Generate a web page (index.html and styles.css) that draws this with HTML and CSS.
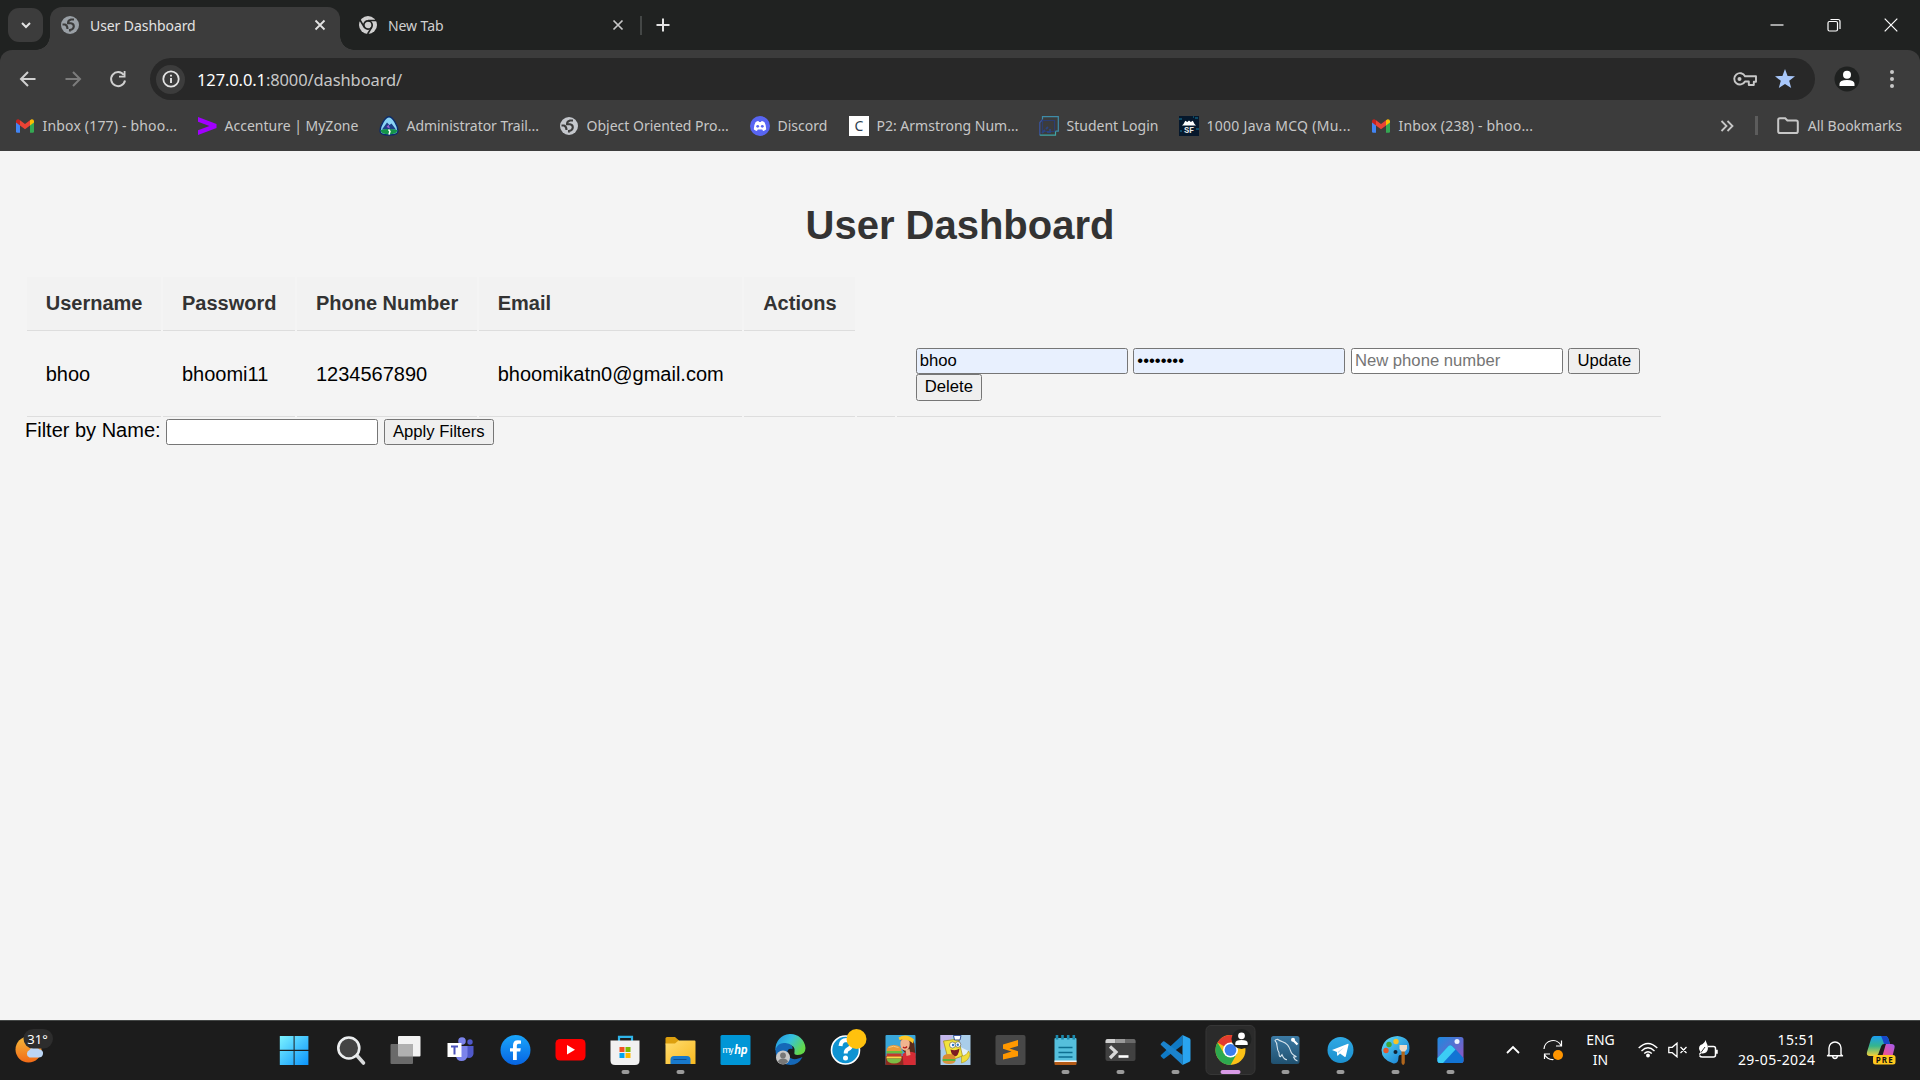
FILE: index.html
```html
<!DOCTYPE html>
<html lang="en">
<head>
<meta charset="utf-8">
<title>User Dashboard</title>
<link rel="stylesheet" href="styles.css">
</head>
<body>
<svg class="defs" width="0" height="0" aria-hidden="true">
  <defs>
    <symbol id="globe" viewBox="0 0 20 20">
      <circle cx="10" cy="10" r="9" fill="currentColor"/>
      <path d="M14 4.500h-3Q8 5.200 8 8.200h3q2.800.3 2.800 3.300-.3 3-3.800 3.500v1.500M2.500 9.500H5q2.500.8 2.500 4.500" fill="none" stroke="var(--hole)" stroke-width="2.100"/>
    </symbol>
    <symbol id="gmail" viewBox="0 0 20 20">
      <path d="M1 5v10.500q0 1.200 1.200 1.200H5V8z" fill="#4285f4"/>
      <path d="M19 5v10.500q0 1.200-1.200 1.200H15V8z" fill="#34a853"/>
      <path d="M15 4.300v5.200l4-3V5q-.2-2-2.400-1.800z" fill="#fbbc04"/>
      <path d="M5 4.300v5.200l-4-3V5q.2-2 2.400-1.800z" fill="#c5221f"/>
      <path d="M5 4.300 10 8l5-3.700v5.200L10 13.200 5 9.500z" fill="#ea4335"/>
    </symbol>
    <linearGradient id="gWin" x1="0" y1="0" x2="1" y2="1"><stop offset="0" stop-color="#7cf3ff"/><stop offset="1" stop-color="#0a93fb"/></linearGradient>
    <linearGradient id="gSun" x1="0" y1="0" x2="0" y2="1"><stop offset="0" stop-color="#f5b93a"/><stop offset="1" stop-color="#f26a17"/></linearGradient>
    <linearGradient id="gFb" x1="0" y1="0" x2="0" y2="1"><stop offset="0" stop-color="#19a5fb"/><stop offset="1" stop-color="#0764e2"/></linearGradient>
    <linearGradient id="gFold" x1="0" y1="0" x2="1" y2="1"><stop offset="0" stop-color="#ffdc70"/><stop offset="1" stop-color="#f9b91f"/></linearGradient>
    <linearGradient id="gEdge" x1="0" y1="0" x2="1" y2=".5"><stop offset="0" stop-color="#1f8fe0"/><stop offset=".5" stop-color="#35c0e0"/><stop offset="1" stop-color="#63d84a"/></linearGradient>
    <linearGradient id="gPhoto" x1="0" y1="0" x2="1" y2="1"><stop offset="0" stop-color="#1a8be0"/><stop offset="1" stop-color="#9a50c0"/></linearGradient>
    <linearGradient id="gPal" x1="0" y1="0" x2="1" y2="1"><stop offset="0" stop-color="#5fe0f8"/><stop offset="1" stop-color="#0e72cf"/></linearGradient>
    <linearGradient id="gTg" x1="0" y1="0" x2="0" y2="1"><stop offset="0" stop-color="#2fa9e4"/><stop offset="1" stop-color="#1c90cf"/></linearGradient>
    <linearGradient id="gSql" x1="0" y1="0" x2="0" y2="1"><stop offset="0" stop-color="#3c7aa4"/><stop offset="1" stop-color="#20506f"/></linearGradient>
    <linearGradient id="gCo1" x1="0" y1="0" x2="0" y2="1"><stop offset="0" stop-color="#1b9df0"/><stop offset=".5" stop-color="#35b58c"/><stop offset="1" stop-color="#f4d03a"/></linearGradient>
    <linearGradient id="gCo2" x1="1" y1="0" x2="0" y2="1"><stop offset="0" stop-color="#a25cf0"/><stop offset=".6" stop-color="#e8529a"/><stop offset="1" stop-color="#f77b3c"/></linearGradient>
  </defs>
</svg>

<header class="browser">
  <div class="tabstrip">
    <button class="tab-search" aria-label="Search tabs"><svg width="12" height="12" viewBox="0 0 12 12"><path d="M2 4l4 4 4-4" fill="none" stroke="#e3e3e3" stroke-width="2"/></svg></button>
    <div class="tab active">
      <svg class="fav" viewBox="0 0 20 20"><use href="#globe"/></svg>
      <span class="label">User Dashboard</span>
      <svg class="x" viewBox="0 0 12 12"><path d="M1.500 1.500l9 9m0-9l-9 9" stroke="#e3e3e3" stroke-width="1.800"/></svg>
    </div>
    <div class="tab second">
      <svg class="fav" viewBox="0 0 20 20"><circle cx="10" cy="10" r="9" fill="#d0d0d0"/><circle cx="10" cy="10" r="4.200" fill="#d0d0d0" stroke="#202221" stroke-width="1.700"/><path d="M10 5.500h8.500M6.200 12.200L2 5M13.800 12.200L9.600 19" stroke="#202221" stroke-width="1.600"/></svg>
      <span class="label">New Tab</span>
      <svg class="x" viewBox="0 0 12 12"><path d="M1.500 1.500l9 9m0-9l-9 9" stroke="#c7c7c7" stroke-width="1.700"/></svg>
    </div>
    <span class="tab-sep"></span>
    <svg class="plus" width="14" height="14" viewBox="0 0 14 14"><path d="M7 .5v13M.5 7h13" stroke="#e3e3e3" stroke-width="2"/></svg>
    <div class="winbtns">
      <svg width="14" height="14" viewBox="0 0 14 14"><path d="M.5 7h13" stroke="#fff" stroke-width="1.200"/></svg>
      <svg width="14" height="14" viewBox="0 0 14 14"><rect x="1" y="3.500" width="9.500" height="9.500" rx="1.500" fill="none" stroke="#fff" stroke-width="1.200"/><path d="M3.500 1.500h7.500q2 0 2 2v7.500" fill="none" stroke="#fff" stroke-width="1.200"/></svg>
      <svg width="14" height="14" viewBox="0 0 14 14"><path d="M.7.700l12.600 12.600m0-12.600L.7 13.300" stroke="#fff" stroke-width="1.200"/></svg>
    </div>
  </div>
  <div class="toolbar">
    <div class="nav">
      <svg width="20" height="20" viewBox="0 0 20 20"><path d="M17.500 10H3.500M10 3L3 10l7 7" fill="none" stroke="#d0d0d0" stroke-width="2"/></svg>
      <svg width="20" height="20" viewBox="0 0 20 20"><path d="M2.500 10h14M10 3l7 7-7 7" fill="none" stroke="#7c7c7c" stroke-width="2"/></svg>
      <svg width="20" height="20" viewBox="0 0 20 20"><path d="M15.800 6A7 7 0 1 0 17 11.500" fill="none" stroke="#d0d0d0" stroke-width="2"/><path d="M17.500 2v6.500H11V6.800h4.700V2z" fill="#d0d0d0"/></svg>
    </div>
    <div class="omnibox">
      <span class="info"><svg width="18" height="18" viewBox="0 0 18 18"><circle cx="9" cy="9" r="7.700" fill="none" stroke="#e3e3e3" stroke-width="1.800"/><path d="M9 8v5M9 4.700v1.900" stroke="#e3e3e3" stroke-width="1.900"/></svg></span>
      <span class="url"><b>127.0.0.1</b>:8000/dashboard/</span>
      <svg class="key" width="24" height="16" viewBox="0 0 24 16"><path d="M12 5.200h11v5.600h-2.200V14h-5v-3.500H12A5.700 5.700 0 1 1 12 5.200z" fill="none" stroke="#c7c7c7" stroke-width="1.900" stroke-linejoin="round"/><circle cx="6.500" cy="8" r="2" fill="#c7c7c7"/></svg>
      <svg class="star" width="20" height="20" viewBox="0 0 20 20"><path d="M10 0l2.600 6.900 7.400.3-5.800 4.600 2 7.200L10 14.900 3.800 19l2-7.200L0 7.200l7.400-.3z" fill="#a8c7fa"/></svg>
    </div>
    <svg class="avatar" width="26" height="26" viewBox="0 0 26 26"><circle cx="13" cy="13" r="12.500" fill="#1f2120"/><circle cx="13" cy="8.800" r="4" fill="#fff"/><path d="M5.500 20v-2.200q0-3.800 7.500-3.800t7.500 3.800V20z" fill="#fff"/></svg>
    <svg class="dots" width="6" height="20" viewBox="0 0 6 20"><g fill="#c7c7c7"><circle cx="3" cy="3" r="2"/><circle cx="3" cy="10" r="2"/><circle cx="3" cy="17" r="2"/></g></svg>
  </div>
  <nav class="bookmarks">
    <div class="marks">
      <a class="mail"><svg viewBox="0 0 20 20"><use href="#gmail"/></svg><span>Inbox (177) - bhoo...</span></a>
      <a><svg viewBox="0 0 20 20"><path d="M1 1l18.500 7v4L1 19v-4.800L12.500 10 1 5.800z" fill="#a100ff"/></svg><span>Accenture | MyZone</span></a>
      <a class="trail"><svg viewBox="0 0 20 20"><path d="M10 .8C6 .8 1 10 1 15q0 4 9 4t9-4C19 10 14 .8 10 .8z" fill="#8ad4f5" stroke="#0b2b6b" stroke-width="1.400"/><path d="M3 13.500L8 6.500l2.500 2.500 2-1.500 4.500 6z" fill="#1d3f86"/><path d="M7.500 11l2-2.500 1.500 4z" fill="#9a5bd0"/><path d="M1.700 14q8-2 16.600 0 0 4.300-8.300 4.300T1.700 14z" fill="#149447"/><path d="M9.500 13.500l1.500 2-1 3" fill="none" stroke="#fff" stroke-width="1.500"/></svg><span>Administrator Trail...</span></a>
      <a class="web"><svg viewBox="0 0 20 20"><use href="#globe"/></svg><span>Object Oriented Pro...</span></a>
      <a><svg viewBox="0 0 20 20"><circle cx="10" cy="10" r="10" fill="#5865f2"/><path d="M5.500 6.200q1.500-1.200 3-1.200l.5.900h2l.5-.9q1.500 0 3 1.200 1.900 3.500 1.600 7.200-1.600 1.300-3 1.500l-.9-1.500H7.800l-.9 1.500q-1.400-.2-3-1.500Q3.600 9.700 5.500 6.200z" fill="#fff"/><circle cx="7.700" cy="10.300" r="1.400" fill="#5865f2"/><circle cx="12.300" cy="10.300" r="1.400" fill="#5865f2"/></svg><span>Discord</span></a>
      <a><i class="cbox">C</i><span>P2: Armstrong Num...</span></a>
      <a><svg viewBox="0 0 20 20"><g fill="none" stroke-width="1.200"><path d="M3.500 3.500V.7h15.800v14.500h-2.800" stroke="#3f8ca8"/><path d="M.8 19.200V6.500L3.500 3.500" stroke="#3a55a0"/><path d="M.8 19.200h15.700v-4" stroke="#3fa6a6"/><path d="M3.500 15.500v-11h12v11z" stroke="#2c3e72"/><path d="M3 17l3-3m1-1l2-2M8 16h3v-3" stroke="#2c4580" stroke-width="1.800"/></g></svg><span>Student Login</span></a>
      <a class="java"><svg viewBox="0 0 20 20"><rect width="20" height="20" fill="#06182c"/><path d="M0 3h3M16 2h3M1 15h2M17 13h3M14 1h1" stroke="#0c4a66" stroke-width="2"/><path d="M4.500 8l1.800-3.200 2 1.200L10 4.500l1.800 1.500 2-1.200L15.500 8l1.500 1.500H3z" fill="#fff"/><text x="10" y="17" text-anchor="middle" font-size="8" font-weight="bold" font-family="Inter, sans-serif" fill="#e8e8e8">SF</text></svg><span>1000 Java MCQ (Mu...</span></a>
      <a class="mail"><svg viewBox="0 0 20 20"><use href="#gmail"/></svg><span>Inbox (238) - bhoo...</span></a>
    </div>
    <div class="rest">
      <svg width="14" height="14" viewBox="0 0 14 14"><path d="M1.500 2l5 5-5 5M7.500 2l5 5-5 5" fill="none" stroke="#c7c7c7" stroke-width="1.800"/></svg>
      <i class="bar"></i>
      <svg class="folder" width="22" height="18" viewBox="0 0 22 18"><path d="M1.200 3q0-1.800 1.600-1.800h5.400l2.200 2.300h8.800q1.600 0 1.600 1.700v9q0 1.800-1.600 1.800H2.800q-1.600 0-1.600-1.800z" fill="none" stroke="#c7c7c7" stroke-width="2"/></svg>
      <span>All Bookmarks</span>
    </div>
  </nav>
</header>

<main class="page">
  <h1>User Dashboard</h1>
  <table>
    <tr><th>Username</th><th>Password</th><th>Phone Number</th><th>Email</th><th>Actions</th></tr>
    <tr>
      <td>bhoo</td><td>bhoomi11</td><td>1234567890</td><td>bhoomikatn0@gmail.com</td><td></td><td></td>
      <td><div class="edit"><input class="filled" type="text" value="bhoo"> <input class="filled" type="password" value="bhoomi11"> <input type="text" placeholder="New phone number"> <button>Update</button> <button>Delete</button></div></td>
    </tr>
  </table>
  <form class="filter"><label for="name">Filter by Name:</label> <input id="name" type="text"> <button type="button">Apply Filters</button></form>
</main>

<footer class="taskbar">
  <svg class="weather" width="60" height="60" viewBox="0 0 60 60"><circle cx="28.500" cy="29.500" r="13" fill="url(#gSun)"/><path d="M29.500 37.500a4 4 0 0 1 0-7.500 6 5.500 0 0 1 10-.5q4 .6 3.500 4.500-.6 3.500-4.500 3.500z" fill="#bcd6f5"/><rect x="23.500" y="9" width="29.500" height="19.500" rx="9.700" fill="#2d2d2d"/><text x="37.500" y="23.500" text-anchor="middle" font-family="Noto Sans, sans-serif" font-size="13" fill="#fff">31°</text></svg>
  <div class="apps">
    <svg viewBox="-27.5 0 55 60"><path d="M-15.700 16h13.800v13.800h-13.800zM-.9 16h13.800v13.800H-.9zM-15.700 31h13.800v14h-13.800zM-.9 31h13.800v14H-.9z" fill="url(#gWin)"/></svg>
    <svg viewBox="-27.5 0 55 60"><path d="M6 35l7 8" stroke="#d8dadb" stroke-width="3.600" stroke-linecap="round"/><circle cx="-1.700" cy="28" r="10.500" fill="#444" stroke="#eceeef" stroke-width="2.600"/></svg>
    <svg viewBox="-27.5 0 55 60"><rect x="-7.500" y="16" width="22.500" height="20.500" rx="1" fill="#f2f2f2"/><rect x="-15" y="24" width="22.500" height="20" rx="1" fill="#6a6a6a"/><path d="M-7.500 24h15v12.500h-14q-1 0-1-1z" fill="#b0b0b0"/></svg>
    <svg viewBox="-27.5 0 55 60"><circle cx="9.500" cy="22" r="2.700" fill="#5059c9"/><path d="M5 26h8v8q-1 4-4.500 4T3 36z" fill="#5059c9"/><circle cx="1.500" cy="21" r="3.800" fill="#7b83eb"/><path d="M-4.500 26H7v10q-1 5-6 5t-5.500-5z" fill="#7b83eb"/><rect x="-13" y="23" width="14" height="14" fill="#fff"/><path d="M-9.500 26.500h7M-6 26.500v8" stroke="#4b53bc" stroke-width="2"/></svg>
    <svg viewBox="-27.5 0 55 60"><circle cy="30" r="15" fill="url(#gFb)"/><path d="M5.500 20.500v3.200H3.200q-1.900 0-1.900 1.800v2.700h4l-.6 3.400H1.300v8.400h-3.800v-8.400h-3v-3.400h3v-2.700q0-5.200 4.900-5.200z" fill="#fff"/></svg>
    <svg viewBox="-27.5 0 55 60"><rect x="-15" y="19" width="30" height="21.500" rx="4.500" fill="#f00"/><path d="M-3.500 25v9.500l8-4.700z" fill="#fff"/></svg>
    <svg viewBox="-27.5 0 55 60"><path d="M-6.500 22v-5.200h13V22" fill="none" stroke="#2fb4e8" stroke-width="2.200"/><path d="M-15 20.500h29v20q0 4.500-4.500 4.500h-20q-4.500 0-4.500-4.500z" fill="#f1f1f1"/><path d="M-6 27h5v5h-5z" fill="#f25022"/><path d="M0 27h5v5H0z" fill="#7fba00"/><path d="M-6 33h5v5h-5z" fill="#00a4ef"/><path d="M0 33h5v5H0z" fill="#ffb900"/><rect x="-4" y="50" width="8" height="4" rx="2" fill="#9a9a9a"/></svg>
    <svg viewBox="-27.5 0 55 60"><path d="M-15 18.500q0-1.500 1.500-1.500h8l4 3.500v4h-13.500z" fill="#dd9f0e"/><path d="M-15 23.500h9.500l3.500-3h16q1 0 1 1V44h-30z" fill="url(#gFold)"/><path d="M-10 44v-4.500q0-3.500 3.500-3.500h13q3.500 0 3.500 3.500V44z" fill="#1879cc"/><path d="M-7 39.500h13" stroke="#0d4f91" stroke-width="1"/><rect x="-4" y="50" width="8" height="4" rx="2" fill="#9a9a9a"/></svg>
    <svg viewBox="-27.5 0 55 60"><rect x="-15" y="15" width="30" height="30" rx="1.500" fill="#0096d6"/><text x="-13" y="33" font-family="Roboto, sans-serif" font-size="9" fill="#fff" textLength="11">my</text><text x="-1" y="34" font-family="Roboto, sans-serif" font-size="13" font-style="italic" font-weight="bold" fill="#fff" textLength="13" lengthAdjust="spacingAndGlyphs">hp</text></svg>
    <svg viewBox="-27.5 0 55 60"><path d="M-15 30a15 15 0 0 1 30-2q0 7-8 7-4 0-3-3 1-7-6-7-8 0-7 10z" fill="url(#gEdge)"/><path d="M-15 29q3-7 10-6 8 1 7 6-6-1-5 5 2 6 9 5 4-1 6-2-4 8-12 8-15-1-15-16z" fill="#1568b8"/><circle cx="-7.500" cy="37.500" r="7" fill="#c9c9c9"/><circle cx="-7.500" cy="35.500" r="2.900" fill="#777"/><path d="M-12.500 42q.5-3.500 5-3.500t5 3.500q-5 4.500-10 0z" fill="#777"/></svg>
    <svg viewBox="-27.5 0 55 60"><circle cy="30" r="14" fill="#0f93d2" stroke="#fff" stroke-width="1.600"/><path d="M-5 26q.5-6 6-6 5 .5 5 4.500 0 3-4 5-1.800 1-1.800 4" fill="none" stroke="#fff" stroke-width="4"/><circle cx="0" cy="38" r="2.500" fill="#fff"/><circle cx="11" cy="19" r="10" fill="#ffc10e"/></svg>
    <svg viewBox="-27.5 0 55 60"><rect x="-15" y="15" width="30" height="30" rx="1" fill="#3aa7da"/><path d="M-15 36h30v9h-30z" fill="#8b2b20"/><path d="M0 19q11-7 14 5l1 14-5 1-8-9z" fill="#5a2b1c"/><path d="M0 22q1-4 5.500-3.500 5 1.500 3.500 7.500-1.500 5-5 4.500-5-1.500-4-8.500z" fill="#f2b48e"/><path d="M-2 17.500q8-5 15.500 2l-1 4Q7 18-1 20z" fill="#ffc928"/><path d="M2 34q5-4 13-1v12H3z" fill="#d62c35"/><path d="M5 30l4-1 1 6-4 1z" fill="#e8a680"/><path d="M2.500 27q2 2 4-.5" stroke="#b71c1c" stroke-width="1.300" fill="none"/><path d="M-14 31q0-6 7.500-6T1 31z" fill="#e69a3a"/><path d="M-12 27.500q5-2.500 10 0" stroke="#f6c777" fill="none"/><path d="M-14 31h16v2.500h-16z" fill="#6abf3c"/><path d="M-14 33.500h15v3h-15z" fill="#c43a2b"/><path d="M-14 36.500h15v2h-15z" fill="#ffd24a"/><path d="M-14 38.500h15q-1 5-7.500 5t-7.500-5z" fill="#7dbb45"/></svg>
    <svg viewBox="-27.5 0 55 60"><rect x="-15" y="15" width="30" height="30" fill="#a9cdea"/><path d="M-15 15h12l-4 10-8 5z" fill="#c3b6ea"/><path d="M5 27l8 4-3 8-5-3z" fill="#e4f0fa"/><path d="M-12 21l15-2 4 17-14 5z" fill="#f3e33c" stroke="#a9961d" stroke-width=".8"/><path d="M-2 15.500h7.500l-1 4.500H-1z" fill="#fff" stroke="#27428c" stroke-width=".9"/><circle cx="-3" cy="25" r="3" fill="#fff" stroke="#333" stroke-width=".5"/><circle cx="2.500" cy="24.500" r="2.800" fill="#fff" stroke="#333" stroke-width=".5"/><circle cx="-2.500" cy="25" r="1.200" fill="#2c77c4"/><circle cx="2.300" cy="24.700" r="1.200" fill="#2c77c4"/><path d="M-5 29.500q5 2 9-1-1 8-5 8-3-1-4-7z" fill="#7c1d22"/><path d="M6 36q5 0 7-5l1.500 3q-1 7-8.500 9z" fill="#f0dc3a" stroke="#a9961d" stroke-width=".6"/><path d="M-13 39q0-5 6.500-5T0 39z" fill="#d98a31"/><path d="M-13 39H0v2h-13z" fill="#5cb338"/><path d="M-13 41H0q-1 3-6.500 3t-6.500-3z" fill="#d99340"/></svg>
    <svg viewBox="-27.5 0 55 60"><rect x="-15" y="15" width="30" height="30" rx="2" fill="#484848"/><path d="M7.500 20v6L-1 28.500l8.500 2.800v4.900L-7.500 39.500v-5.300L1 31.500l-8.500-2.800v-4.200z" fill="#ff9800"/></svg>
    <svg viewBox="-27.5 0 55 60"><rect x="-11" y="18" width="22" height="25" rx="1" fill="#55bfdc"/><path d="M-11 41.500h22V44q0 1-1 1h-20q-1 0-1-1z" fill="#b35a16"/><path d="M-11 40.500h22v1.500h-22z" fill="#f4f4f4"/><path d="M-7 27.500H7M-7 32.500H7M-7 37H7" stroke="#0d6f91" stroke-width="1.700"/><path d="M-8.500 15v4.500M-3 15v4.500M2.700 15v4.500M8.300 15v4.500" stroke="#1b8aae" stroke-width="2.600"/><rect x="-4" y="50" width="8" height="4" rx="2" fill="#9a9a9a"/></svg>
    <svg viewBox="-27.5 0 55 60"><rect x="-15" y="19" width="30" height="22" rx="2" fill="#414141"/><path d="M-15 23v-2q0-2 2-2h8v4z" fill="#d0d0d0"/><path d="M-5 19H5v4H-5z" fill="#9a9a9a"/><path d="M5 19h8q2 0 2 2v2H5z" fill="#6a6a6a"/><path d="M-10.500 26.500l6 5.500-6 6" fill="none" stroke="#d8d8d8" stroke-width="3.200"/><path d="M-2 36.500H8" stroke="#fff" stroke-width="2.600"/><rect x="-4" y="50" width="8" height="4" rx="2" fill="#9a9a9a"/></svg>
    <svg viewBox="-27.5 0 55 60"><path d="M7 15v10L-11 38.500q-.8.500-1.500 0l-2-2q-.8-.8 0-1.600z" fill="#0f79c4"/><path d="M7 45V35L-11 21.500q-.8-.5-1.500 0l-2 2q-.8.800 0 1.600z" fill="#1b83cc"/><path d="M7 15l6.500 3q1.500.7 1.500 2v20q0 1.300-1.500 2L7 45z" fill="#29a4f0"/><rect x="-4" y="50" width="8" height="4" rx="2" fill="#9a9a9a"/></svg>
    <svg viewBox="-27.5 0 55 60"><rect x="-24.500" y="5.500" width="49" height="49" rx="5" fill="#2b2b2b" stroke="#363636"/><circle cy="30" r="15" fill="#fbc116"/><path d="M0 30L-13 22.500A15 15 0 0 1 13 22.500H0z" fill="#e33b2e"/><path d="M-13 22.500A15 15 0 0 0 0 45L6.500 33.500 0 30-6.500 33.500z" fill="#2da94f"/><circle cy="30" r="7.500" fill="#fff"/><circle cy="30" r="5.900" fill="#3b7ded"/><circle cx="11" cy="19" r="10" fill="#1f2120"/><circle cx="11" cy="15.800" r="3.400" fill="#fff"/><path d="M4.800 25v-2q0-3 6.200-3t6.200 3v2z" fill="#fff"/><rect x="-10" y="50" width="20" height="4" rx="2" fill="#d89ae6"/></svg>
    <svg viewBox="-27.5 0 55 60"><rect x="-14.500" y="16" width="28.500" height="28" rx="2.500" fill="url(#gSql)"/><path d="M12 41q-3-1-4-4l3-.3q-5-2-6-6-2-7-8-9-3-1-5-2.500-2 0-2.500 1.500 2 2 2 5 .5 5 2 7 0 4 1.500 4l1.500-2q2 5 5 5" fill="none" stroke="#d5e3ec" stroke-width="1.100"/><path d="M7 19.500l5 5" stroke="#fff" stroke-width="2.200"/><circle cx="7.500" cy="19.800" r="2" fill="#fff"/><rect x="-4" y="50" width="8" height="4" rx="2" fill="#9a9a9a"/></svg>
    <svg viewBox="-27.5 0 55 60"><circle cy="30" r="13" fill="url(#gTg)"/><path d="M-8.500 30L7.500 23.800q.8-.2.500 1l-2.700 11.500q-.3 1-1.300.5L-.5 33.500l-2 2q-.8.600-.9-.5l-.2-3z" fill="#fff"/><path d="M-3 32l7-5-6.200 6" fill="#b8d8ec"/><rect x="-4" y="50" width="8" height="4" rx="2" fill="#9a9a9a"/></svg>
    <svg viewBox="-27.5 0 55 60"><path d="M2 16q12 1 12 12 0 8-6 7-5-1-5 2 0 7-5 6.500Q-14 40-14 30-12 17 2 16z" fill="url(#gPal)"/><circle cx="0" cy="32" r="2" fill="#123"/><circle cx="-9.500" cy="30.500" r="2.700" fill="#e2572b"/><circle cx="-6.500" cy="24.500" r="2.700" fill="#3fa535"/><circle cx=".5" cy="21.500" r="2.700" fill="#f7c325"/><path d="M6 30.500h3.300V43q-1.600 4-3.300 0z" fill="#b0661c"/><path d="M4 25h7.500v4l-2 2.500H6L4 29z" fill="#eddcc8"/><rect x="-4" y="50" width="8" height="4" rx="2" fill="#9a9a9a"/></svg>
    <svg viewBox="-27.5 0 55 60"><rect x="-13" y="17" width="26" height="26" rx="2.500" fill="url(#gPhoto)"/><path d="M-13 38L-2.500 26.500q2.500-2.500 5 0L13 38v2.500q0 2.500-2.500 2.500h-21q-2.500 0-2.500-2.500z" fill="#1274d4"/><path d="M-13 38L-2.500 26.500q2-2 4-.6L5 29.500-7.500 43h-3q-2.500 0-2.500-2.500z" fill="#3ccdf5"/><circle cx="6.500" cy="21.500" r="2.500" fill="#eaf2ff"/><rect x="-4" y="50" width="8" height="4" rx="2" fill="#9a9a9a"/></svg>
  </div>
  <div class="tray">
    <svg class="chev" width="14" height="10" viewBox="0 0 14 10"><path d="M1 8l6-6 6 6" fill="none" stroke="#fff" stroke-width="1.800"/></svg>
    <svg class="sync" width="20" height="22" viewBox="0 0 20 22"><g fill="none" stroke="#fff" stroke-width="1.200"><path d="M1 10A9 9 0 0 1 18 6.500M18.500 1.500v5.500H13M1.500 20v-5H7M1.500 15.500q3 5.500 9 5"/></g><circle cx="15" cy="16" r="5" fill="#ff9500"/></svg>
    <div class="lang"><span>ENG</span><span>IN</span></div>
    <svg class="wifi" width="20" height="16" viewBox="0 0 20 16"><g fill="none" stroke="#fff" stroke-width="1.400"><path d="M.7 6Q10-3.200 19.300 6M3.500 8.900Q10 2.700 16.500 8.900M6.200 11.500Q10 8 13.800 11.500"/></g><circle cx="10" cy="13.500" r="1.900" fill="#fff"/></svg>
    <svg class="mute" width="20" height="16" viewBox="0 0 20 16"><path d="M.8 5.300h3.400L9 1.200v13.600l-4.800-4.100H.8zM12.500 5l6 6m0-6l-6 6" fill="none" stroke="#fff" stroke-width="1.300"/></svg>
    <svg class="batt" width="20" height="20" viewBox="0 0 20 20"><path d="M10 6.500h5.500q2 0 2 2v6.500q0 2-2 2h-11q-2 0-3-1.500M19 9.800v4" fill="none" stroke="#fff" stroke-width="1.500"/><path d="M7.500 0q1 3 2 5 1.500 6-2.500 8-2 .8-3.500.3L1.500 15l-.5-1 1.500-2Q-.5 8 2.500 5 6.500 3.500 7.500 0z" fill="#fff"/><path d="M3 12.500L7 7" stroke="#1c1c1c" stroke-width=".9"/></svg>
    <div class="clock"><span>15:51</span><span>29-05-2024</span></div>
    <svg class="bell" width="18" height="20" viewBox="0 0 18 20"><path d="M3 14.500V8a6 6 0 0 1 12 0v6.500l1.500 1.200H1.500z" fill="none" stroke="#fff" stroke-width="1.400" stroke-linejoin="round"/><path d="M6.500 16q.5 2.500 2.500 2.500t2.500-2.500" fill="none" stroke="#fff" stroke-width="1.400"/></svg>
    <svg class="copilot" width="30" height="30" viewBox="0 0 30 30"><path d="M8 1h11q2.500 0 3.500 3l1.500 5h-6q-2 0-2.700 2l-3 8q-1 2-3.500 2H4q-4 0-3-4L5 4q1-3 3-3z" fill="url(#gCo1)"/><path d="M15 1h4q2.500 0 3.500 3l1.500 5h-6q-1.800-6-3-8z" fill="#1747c9"/><path d="M20 9h5q4.500 0 3.500 4l-2 8q-1 3-4 3H12q4-1 5-5l2-7q.5-2 1-3z" fill="url(#gCo2)"/><rect x="7" y="20" width="22.500" height="9.500" rx="2.500" fill="#ffc81e"/><text x="18.200" y="27.700" text-anchor="middle" font-family="Noto Sans, sans-serif" font-size="8" font-weight="bold" textLength="17" fill="#111">PRE</text></svg>
  </div>
</footer>
</body>
</html>
```
FILE: styles.css
```css
* { box-sizing: border-box; }
body {
  margin: 0;
  height: 1080px;
  overflow: hidden;
  display: flex;
  flex-direction: column;
  background: #f4f4f4;
  font-family: "Liberation Sans", Arial, sans-serif;
}
.defs { display: block; height: 0; flex: none; }

/* browser chrome */
.browser {
  flex: none;
  height: 151px;
  background: #202221;
  color: #e3e3e3;
  font-family: "Noto Sans", sans-serif;
  font-size: 14px;
}
.browser svg, .taskbar svg { display: block; flex: none; }
.tabstrip { height: 50px; display: flex; align-items: center; padding-left: 8px; }
.tab-search {
  width: 35px; height: 34px; border: 0; border-radius: 11px; padding: 0;
  background: #3c3c3c; display: flex; align-items: center; justify-content: center;
  margin-right: 7px;
}
.tab { height: 43px; margin-top: 7px; padding: 0 14px 7px 10px; display: flex; align-items: center; }
.tab.active { width: 290px; background: #3c3c3c; border-radius: 12px 12px 0 0; --hole: #3c3c3c; color: #e3e3e3; position: relative; }
.tab.active::before, .tab.active::after {
  content: ""; position: absolute; bottom: 0; width: 14px; height: 14px;
}
.tab.active::before { left: -14px; background: radial-gradient(circle at 0 0, transparent 13.5px, #3c3c3c 14px); }
.tab.active::after { right: -14px; background: radial-gradient(circle at 100% 0, transparent 13.5px, #3c3c3c 14px); }
.tab.second { width: 300px; padding-left: 18px; padding-right: 16px; color: #d0d0d0; }
.fav { width: 20px; height: 20px; margin-right: 10px; color: #9aa0a6; }
.label { white-space: nowrap; letter-spacing: -.08px; }
.x { width: 12px; height: 12px; margin-left: auto; }
.tab-sep { width: 2px; height: 19px; background: #444746; }
.plus { margin-left: 14px; }
.winbtns { margin-left: auto; display: flex; gap: 43px; padding-right: 22px; }
.toolbar {
  height: 52px; background: #3c3c3c; border-radius: 12px 12px 0 0;
  display: flex; align-items: center; padding: 6px 0 0 18px;
}
.nav { display: flex; gap: 25px; margin-right: 22px; }
.omnibox {
  width: 1665px; height: 42px; border-radius: 21px; background: #282828;
  display: flex; align-items: center; padding: 0 20px 0 6px;
}
.info { width: 29px; height: 29px; border-radius: 50%; background: #3c3c3c; display: flex; align-items: center; justify-content: center; }
.url { font-size: 16.5px; margin-left: 12px; color: #c7c7c7; letter-spacing: -.11px; }
.url b { font-weight: normal; color: #fff; }
.key { margin-left: auto; margin-right: 18px; }
.avatar { margin-left: 19px; }
.dots { margin-left: 29px; }
.bookmarks {
  height: 49px; background: #3c3c3c; display: flex; align-items: center;
  padding: 0 0 2px 15px; color: #c7c7c7;
}
.marks { display: grid; grid-template-columns: 182px 182px 180px 191px 99px 190px 140px 192px 180px; }
.marks a { display: flex; align-items: center; gap: 7.5px; white-space: nowrap; }
.marks svg { width: 20px; height: 20px; }
.mail span { letter-spacing: .18px; }
.java span { letter-spacing: .28px; }
.trail span { letter-spacing: -.05px; }
.web { color: #c4c7cc; --hole: #3c3c3c; }
.web span { color: #c7c7c7; }
.cbox { width: 20px; height: 20px; background: #fff; color: #2c3e50; font-style: normal; font-size: 14px; line-height: 19px; text-align: center; }
.rest { margin-left: auto; display: flex; align-items: center; padding-right: 18px; }
.bar { width: 3px; height: 19px; background: #5c5c5c; margin: 0 19px 0 21px; }
.folder { margin-right: 9px; }

/* dashboard page, shown at 125% */
.page { flex: 1; zoom: 1.25; padding: 20px; font-size: 16px; }
.page h1 { margin: 21.44px 0; font-size: 32px; text-align: center; color: #333; }
.page table { border-spacing: 2px; }
.page th, .page td { padding: 12px 15px; border-bottom: 1px solid #ddd; text-align: left; white-space: nowrap; }
.page th { background: #f2f2f2; color: #333; }
.edit { width: 581px; white-space: normal; }
.page input, .page button { font-family: inherit; font-size: 13.333px; }
.page input { width: 169.6px; height: 21.2px; padding: 1px 2px 1px 2.6px; border: 1px solid #767676; border-radius: 2px; background: #fff; }
.page button { height: 21.2px; padding: 1px 6.6px; border: 1px solid #767676; border-radius: 2px; background: #efefef; color: #000; }
.page input.filled { background: #e8f0fe; }

/* taskbar */
.taskbar {
  flex: none; height: 60px; background: #1c1c1c; box-shadow: inset 0 1px #444746;
  display: flex; align-items: center; color: #fff;
  font-family: "Noto Sans", sans-serif; font-size: 14px;
}
.weather { margin-right: 208px; }
.apps { display: flex; }
.apps svg { width: 55px; height: 60px; }
.tray { display: flex; align-items: center; flex: 1; padding-left: 27.5px; }
.sync { margin-left: 23px; }
.lang, .clock { display: flex; flex-direction: column; line-height: 20px; }
.lang { width: 40px; margin-left: 18px; text-align: center; }
.wifi { margin-left: 17px; }
.mute { margin-left: 10px; }
.batt { margin-left: 10px; }
.clock { width: 90px; margin-left: 8px; text-align: right; letter-spacing: .45px; }
.bell { margin-left: 10px; }
.copilot { margin-left: 22px; }
```
